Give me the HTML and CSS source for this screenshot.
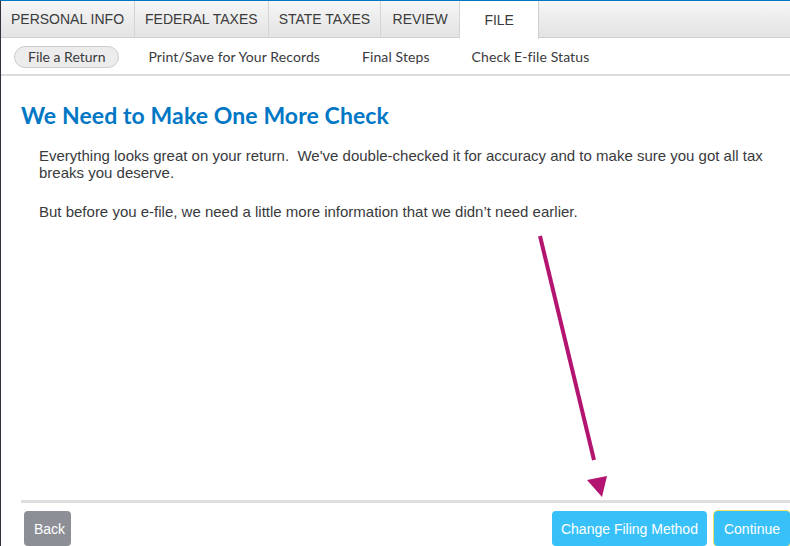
FILE: index.html
```html
<!DOCTYPE html>
<html lang="en">

<head>
    <meta charset="UTF-8">
    <meta name="viewport" content="width=device-width, initial-scale=1.0">
    <title>File - We Need to Make One More Check</title>
    <link rel="stylesheet" href="styles.css">
</head>

<body>

    <div class="page">

        <div class="tabs">
            <div class="tab">PERSONAL INFO</div>
            <div class="tab">FEDERAL TAXES</div>
            <div class="tab">STATE TAXES</div>
            <div class="tab">REVIEW</div>
            <div class="tab active">FILE</div>
        </div>

        <div class="subnav">
            <div class="subnav-item current">File a Return</div>
            <div class="subnav-item">Print/Save for Your Records</div>
            <div class="subnav-item">Final Steps</div>
            <div class="subnav-item">Check E-file Status</div>
        </div>

        <div class="content">
            <h1>We Need to Make One More Check</h1>
            <p>Everything looks great on your return.&nbsp; We've double-checked it for accuracy and to make sure you got all tax breaks you deserve.</p>
            <p>But before you e-file, we need a little more information that we didn’t need earlier.</p>
        </div>

        <div class="footer">
            <button class="btn btn-back">Back</button>
            <div class="footer-right">
                <button class="btn btn-primary btn-change">Change Filing Method</button>
                <button class="btn btn-primary focused">Continue</button>
            </div>
        </div>

        <!-- pointer drawn over the page -->
        <svg class="arrow" width="790" height="546" viewBox="0 0 790 546">
            <line x1="540" y1="236" x2="594" y2="460" stroke="#b3146f" stroke-width="4" />
            <polygon points="587,480 607,476 602,497" fill="#b3146f" />
        </svg>

    </div>

</body>

</html>
```

FILE: styles.css
```css
* {
    margin: 0;
    padding: 0;
    box-sizing: border-box;
}

body {
    width: 790px;
    height: 546px;
    overflow: hidden;
    background: #fff;
    font-family: "Liberation Sans", Arial, sans-serif;
    color: #393a3d;
}

.page {
    position: relative;
    height: 100%;
    display: flex;
    flex-direction: column;
    border-left: 1px solid #2f333b;
    border-top: 1px solid #0077c5;
}

/* top tab bar */
.tabs {
    display: flex;
    height: 37px;
    background: linear-gradient(#f6f6f6, #e3e3e3);
    border-bottom: 1px solid #d0d0d0;
}

.tab {
    padding: 0 10px;
    min-width: 79px;
    display: flex;
    align-items: center;
    justify-content: center;
    font-size: 14px;
    color: #3b3b3b;
    border-right: 1px solid #d3d3d3;
}

.tab.active {
    background: #fff;
    height: 38px;
    border-right: 1px solid #cfcfcf;
}

/* second level nav */
.subnav {
    display: flex;
    align-items: center;
    gap: 16px;
    height: 38px;
    padding: 2px 0 0 13px;
    border-bottom: 2px solid #dcdcdc;
    font-family: Lato, "Open Sans", sans-serif;
    font-size: 14px;
    letter-spacing: 0.1px;
    color: #393a3d;
}

.subnav-item {
    padding: 0 13px;
    line-height: 20px;
}

.subnav-item.current {
    background: #ececec;
    border: 1px solid #cccccc;
    border-radius: 12px;
    letter-spacing: 0;
}

.content {
    flex: 1;
    padding: 25px 20px 0 20px;
}

h1 {
    font-family: Lato, "Open Sans", sans-serif;
    font-weight: bold;
    font-size: 23px;
    letter-spacing: 0.1px;
    color: #0077c5;
    margin-bottom: 18px;
}

p {
    padding-left: 18px;
    font-size: 15px;
    line-height: 17px;
    margin-bottom: 22px;
}

/* bottom button row */
.footer {
    margin-left: 20px;
    border-top: 3px solid #dedede;
    display: flex;
    justify-content: space-between;
    padding: 8px 0 0 3px;
}

.footer-right {
    display: flex;
    gap: 7px;
}

.btn {
    font-family: "Liberation Sans", Arial, sans-serif;
    font-size: 14px;
    color: #fff;
    border: none;
    border-radius: 4px;
    height: 35px;
    padding: 0 10px;
}

.btn-back {
    background: #8c8f96;
    width: 47px;
}

.btn-primary {
    background: #38c1f9;
}

.btn-change {
    padding: 0 9px;
    width: 155px;
}

.btn-primary.focused {
    box-shadow: 0 0 0 1px #f2e35a;
}

.arrow {
    position: absolute;
    top: -1px;
    left: -1px;
    pointer-events: none;
}
```
